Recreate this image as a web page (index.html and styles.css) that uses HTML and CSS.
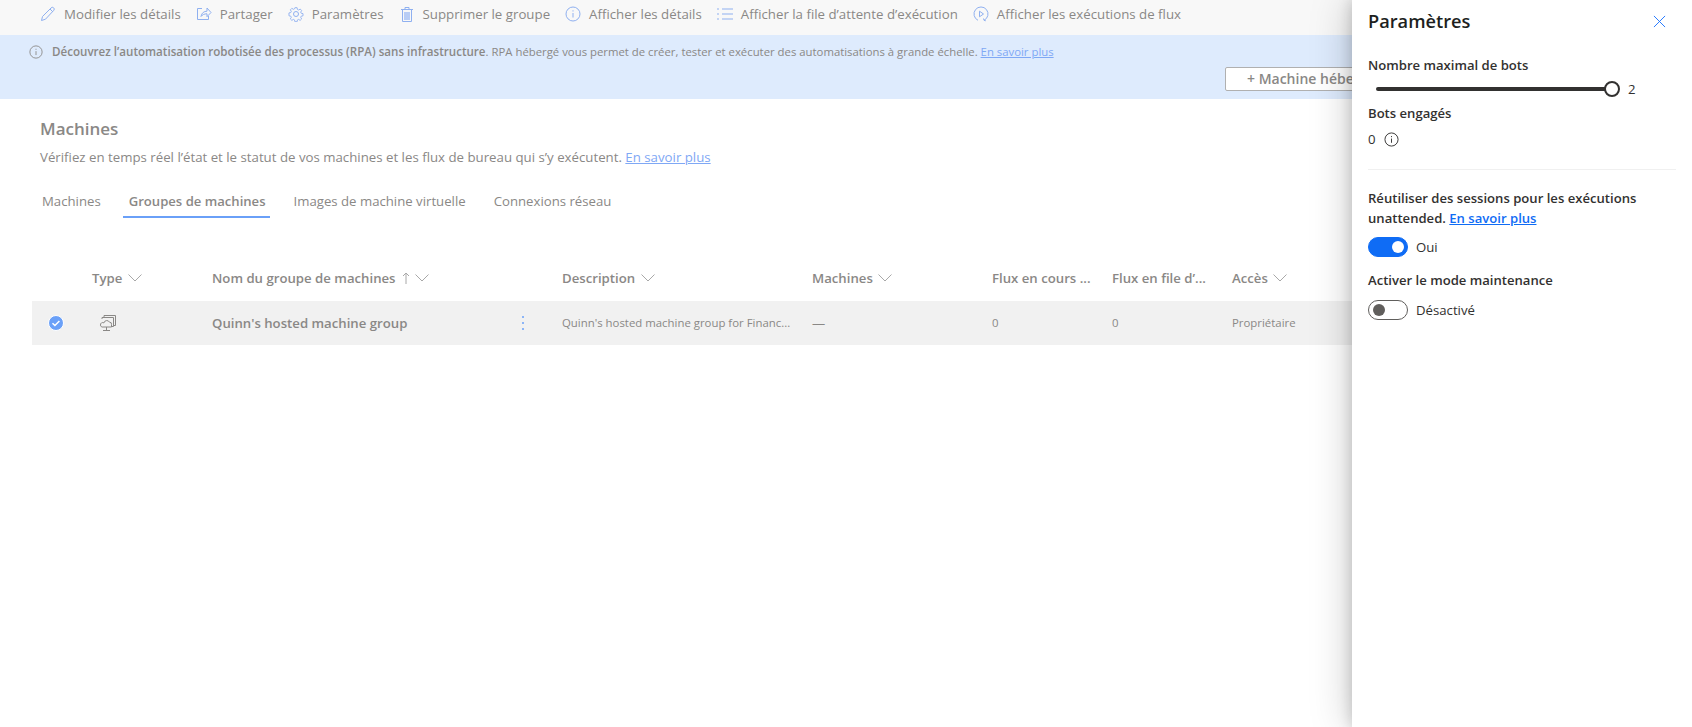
FILE: index.html
```html
<!DOCTYPE html>
<html lang="fr">
  <head>
    <meta charset="utf-8">
    <title>Groupes de machines</title>
    <link rel="stylesheet" href="styles.css">
  </head>
  <body>
    <div id="page">
      <div class="toolbar">
        <span class="cmd">
          <svg viewBox="0 0 16 16"><path d="M1.500 14.500l1-4L11 2a1.500 1.500 0 0 1 2.800 2.300L5.500 13.200zM10 3l3 3"/></svg>
          Modifier les détails
        </span>
        <span class="cmd">
          <svg viewBox="0 0 16 16"><path d="M6 2.500H1.500v11h11V10M5 10.500c.5-3.500 3-5.300 6-5.300V2l4 4.500-4 4.200V7.800c-2.700 0-4.700 1-6 2.700z"/></svg>
          Partager
        </span>
        <span class="cmd">
          <svg viewBox="0 0 16 16"><circle cx="8" cy="8" r="2.500"/><path d="M6.800 1h2.400l.4 2 1.300.6 1.800-1.100 1.600 1.700-1.100 1.700.6 1.300 2 .4v2.400l-2 .4-.6 1.300 1.100 1.700-1.700 1.700-1.700-1.100-1.300.6-.4 2H6.800l-.4-2-1.300-.6-1.700 1.100-1.700-1.700 1.100-1.700-.6-1.300-2-.4V6.800l2-.4.600-1.300-1.100-1.700 1.700-1.700 1.700 1.100 1.300-.6z" transform="translate(.8 .8) scale(.9)"/></svg>
          Paramètres
        </span>
        <span class="cmd">
          <svg viewBox="0 0 16 16"><path d="M2 3.500h12M6 3.500V1.500h4v2M3.500 3.500v12h9v-12"/><path class="fill" d="M5 6h6v8H5z"/></svg>
          Supprimer le groupe
        </span>
        <span class="cmd">
          <svg viewBox="0 0 16 16"><circle cx="8" cy="8" r="7"/><path d="M8 7v4.500M8 4.300v1.200"/></svg>
          Afficher les détails
        </span>
        <span class="cmd">
          <svg viewBox="0 0 16 16"><path d="M5 3h11M5 8h11M5 13h11M1 2v2M1 7v2M1 12v2"/></svg>
          Afficher la file d’attente d’exécution
        </span>
        <span class="cmd">
          <svg viewBox="0 0 16 16"><path d="M5 14.300A7 7 0 1 1 11 14.300M10.500 12.500l.5 1.800 1.800.5"/><path d="M6.500 5.200l4 2.800-4 2.800z"/></svg>
          Afficher les exécutions de flux
        </span>
      </div>

      <div class="banner">
        <div class="banner-msg">
          <svg class="info" viewBox="0 0 16 16"><circle cx="8" cy="8" r="7"/><path d="M8 7v4.500M8 4.300v1.200"/></svg>
          <span><b>Découvrez l’automatisation robotisée des processus (RPA) sans infrastructure</b>. RPA hébergé vous permet de créer, tester et exécuter des automatisations à grande échelle. <a href="#">En savoir plus</a></span>
        </div>
        <div class="banner-actions">
          <button class="btn-new">+ Machine hébergée</button>
        </div>
      </div>

      <div class="head">
        <h1>Machines</h1>
        <p>Vérifiez en temps réel l’état et le statut de vos machines et les flux de bureau qui s’y exécutent. <a href="#">En savoir plus</a></p>
      </div>

      <div class="tabs">
        <span class="tab">Machines</span>
        <span class="tab active">Groupes de machines</span>
        <span class="tab">Images de machine virtuelle</span>
        <span class="tab">Connexions réseau</span>
      </div>

      <div class="grid grid-head">
        <span></span>
        <span>Type <svg class="chev" viewBox="0 0 14 8"><path d="M.5.500l6.500 6.500 6.500-6.500"/></svg></span>
        <span>Nom du groupe de machines <svg class="arrow" viewBox="0 0 8 12"><path d="M4 12V1M1 4l3-3 3 3"/></svg> <svg class="chev" viewBox="0 0 14 8"><path d="M.5.500l6.500 6.500 6.500-6.500"/></svg></span>
        <span>Description <svg class="chev" viewBox="0 0 14 8"><path d="M.5.500l6.500 6.500 6.500-6.500"/></svg></span>
        <span>Machines <svg class="chev" viewBox="0 0 14 8"><path d="M.5.500l6.500 6.500 6.500-6.500"/></svg></span>
        <span>Flux en cours ...</span>
        <span>Flux en file d’...</span>
        <span>Accès <svg class="chev" viewBox="0 0 14 8"><path d="M.5.500l6.500 6.500 6.500-6.500"/></svg></span>
      </div>

      <div class="grid grid-row">
        <span class="check">
          <svg viewBox="0 0 16 16"><circle class="dot" cx="8" cy="8" r="7.500"/><path class="tick" d="M4.500 8.300l2.400 2.200 4.500-4.600"/></svg>
        </span>
        <span class="type-icon">
          <svg viewBox="0 0 18 18"><path d="M5 3V1.500h11.500v10H15M3 5V3.500h11.500v9H13"/><path d="M4 13h8.500v-2.500a2 2 0 0 0-2-2.300 3 3 0 0 0-5.600.7A2.200 2.200 0 0 0 1.500 11a2 2 0 0 0 2.500 2zM7.500 13v3M4 16.500h7"/></svg>
        </span>
        <span class="name">
          Quinn's hosted machine group
          <svg class="more" viewBox="0 0 4 16"><circle cx="2" cy="2" r="1"/><circle cx="2" cy="8" r="1"/><circle cx="2" cy="14" r="1"/></svg>
        </span>
        <span class="small">Quinn's hosted machine group for Financ...</span>
        <span>—</span>
        <span class="small">0</span>
        <span class="small">0</span>
        <span class="small">Propriétaire</span>
      </div>
    </div>

    <aside class="panel">
      <div class="panel-head">
        <h2>Paramètres</h2>
        <svg class="close" viewBox="0 0 14 14"><path d="M1 1l12 12M13 1L1 13"/></svg>
      </div>

      <label class="field-label">Nombre maximal de bots</label>
      <div class="slider">
        <div class="track"><span class="thumb"></span></div>
        <span class="value">2</span>
      </div>

      <label class="field-label">Bots engagés</label>
      <div class="engaged">
        0
        <svg class="info" viewBox="0 0 16 16"><circle cx="8" cy="8" r="7"/><path d="M8 7v4.500M8 4.300v1.200"/></svg>
      </div>

      <hr>

      <label class="field-label wrap">Réutiliser des sessions pour les exécutions unattended. <a href="#">En savoir plus</a></label>
      <div class="toggle-row">
        <span class="toggle on"></span> Oui
      </div>

      <label class="field-label">Activer le mode maintenance</label>
      <div class="toggle-row maint">
        <span class="toggle"></span> Désactivé
      </div>
    </aside>
  </body>
</html>
```

FILE: styles.css
```css
* {
  box-sizing: border-box;
}

html, body {
  margin: 0;
  padding: 0;
  height: 100%;
  overflow: hidden;
  background: #fff;
  font: 13.200px/20px "Open Sans", "Noto Sans", sans-serif;
  color: #8a8886;
}

a {
  color: #7fa8f5;
  text-decoration: underline;
}

svg {
  fill: none;
  stroke: currentColor;
  stroke-width: 1;
  flex: none;
}

#page {
  width: 100%;
}

.toolbar {
  display: flex;
  align-items: center;
  gap: 15px;
  height: 35px;
  padding: 0 0 8px 40px;
  background: #f8f8f8;
  font-size: 13.280px;
}

.cmd {
  display: flex;
  align-items: center;
  gap: 8px;
  white-space: nowrap;
}

.cmd svg {
  width: 16px;
  height: 16px;
  color: #8fb0f0;
}

.cmd svg .fill {
  fill: #b9cdf5;
  stroke: none;
}

.banner {
  height: 64px;
  padding: 7px 0 0 29px;
  background: #deebfd;
  font-size: 11.350px;
}

.banner-msg {
  display: flex;
  align-items: center;
  gap: 9px;
}

.banner-msg b {
  font-size: 11.600px;
  font-weight: 600;
}

.info {
  width: 14px;
  height: 14px;
  color: #8a8886;
}

.banner-actions {
  padding: 5px 0 0 1196px;
}

.btn-new {
  display: block;
  width: 200px;
  height: 24px;
  padding: 0 0 0 21px;
  text-align: left;
  font: inherit;
  font-size: 14px;
  font-weight: 600;
  color: #8a8886;
  background: #fff;
  border: 1px solid #b0b0b0;
  border-radius: 2px;
  white-space: nowrap;
}

.head {
  padding: 18px 0 0 40px;
}

.head h1 {
  margin: 0;
  font-size: 17px;
  line-height: 24px;
  font-weight: 600;
  color: #8a8886;
}

.head p {
  margin: 6px 0 0;
  font-size: 13.250px;
}

.tabs {
  display: flex;
  height: 32px;
  margin: 19px 0 0 36px;
}

.tab {
  padding: 0 6px;
  margin-right: 16px;
  line-height: 30px;
  height: 32px;
}

.tab.active {
  padding-right: 4px;
  margin-right: 18px;
  font-size: 13.100px;
  font-weight: 600;
  border-bottom: 2px solid #6aa0f8;
}

.grid {
  display: grid;
  grid-template-columns: 60px 120px 350px 250px 180px 120px 120px 1fr;
  align-items: center;
  margin-left: 32px;
}

.grid-head {
  height: 46px;
  margin-top: 37px;
  font-weight: 600;
}

.chev {
  width: 14px;
  height: 8px;
  margin-left: 2px;
  vertical-align: 1px;
  color: #a8a8a8;
}

.arrow {
  width: 8px;
  height: 12px;
  margin-left: 3px;
  vertical-align: -1px;
  color: #a8a8a8;
}

.grid-row {
  height: 44px;
  background: #f1f1f1;
}

.check {
  display: flex;
  justify-content: center;
}

.check svg {
  width: 16px;
  height: 16px;
  margin-right: 12px;
}

.dot {
  fill: #6aa0f8;
  stroke: #fff;
}

.tick {
  stroke: #fff;
  stroke-width: 1.500;
}

.type-icon svg {
  display: block;
  width: 18px;
  height: 18px;
  margin-left: 7px;
}

.name {
  display: flex;
  align-items: center;
  justify-content: space-between;
  padding-right: 37px;
  font-weight: 600;
}

.more {
  width: 4px;
  height: 16px;
  fill: #6aa0f8;
  stroke: none;
}

.small {
  font-size: 11.400px;
}

.panel {
  position: absolute;
  top: 0;
  right: 0;
  bottom: 0;
  width: 340px;
  padding: 8px 16px 0;
  background: #fff;
  color: #323130;
  box-shadow: rgba(0, 0, 0, .22) 0 0 40px, rgba(0, 0, 0, .18) 0 0 14px;
}

.panel-head {
  display: flex;
  align-items: center;
  justify-content: space-between;
  height: 26px;
  margin-bottom: 21px;
}

.panel-head h2 {
  margin: 0;
  font-size: 18.200px;
  line-height: 26px;
  font-weight: 600;
  color: #201f1e;
}

.close {
  width: 13px;
  height: 13px;
  margin-right: 10px;
  color: #1a73ff;
}

.field-label {
  display: block;
  font-weight: 600;
  font-size: 13.100px;
  white-space: nowrap;
}

.field-label.wrap {
  white-space: normal;
  width: 300px;
}

.field-label a {
  color: #0f6cf5;
}

.slider {
  display: flex;
  align-items: center;
  height: 18px;
  margin: 5px 0 5px;
  padding-left: 8px;
}

.track {
  position: relative;
  width: 236px;
  height: 4px;
  border-radius: 2px;
  background: #323130;
}

.thumb {
  position: absolute;
  right: -8px;
  top: -6px;
  width: 16px;
  height: 16px;
  border: 2px solid #323130;
  border-radius: 50%;
  background: #fff;
}

.value {
  margin-left: 16px;
}

.engaged {
  display: flex;
  align-items: center;
  gap: 8px;
  margin-top: 6px;
  height: 20px;
}

.engaged .info {
  width: 15px;
  height: 15px;
  color: #323130;
}

.panel hr {
  margin: 20px 0 18px;
  border: 0;
  border-top: 1px solid #f0f0f0;
}

.toggle-row {
  display: flex;
  align-items: center;
  gap: 8px;
  height: 20px;
  margin: 9px 0 13px;
}

.toggle-row.maint {
  margin-top: 10px;
}

.toggle {
  position: relative;
  width: 40px;
  height: 20px;
  border: 1px solid #605e5c;
  border-radius: 10px;
  background: #fff;
}

.toggle::after {
  content: "";
  position: absolute;
  left: 4px;
  top: 3px;
  width: 12px;
  height: 12px;
  border-radius: 50%;
  background: #605e5c;
}

.toggle.on {
  background: #0f6cf5;
  border-color: #0f6cf5;
}

.toggle.on::after {
  left: 23px;
  background: #fff;
}
```
